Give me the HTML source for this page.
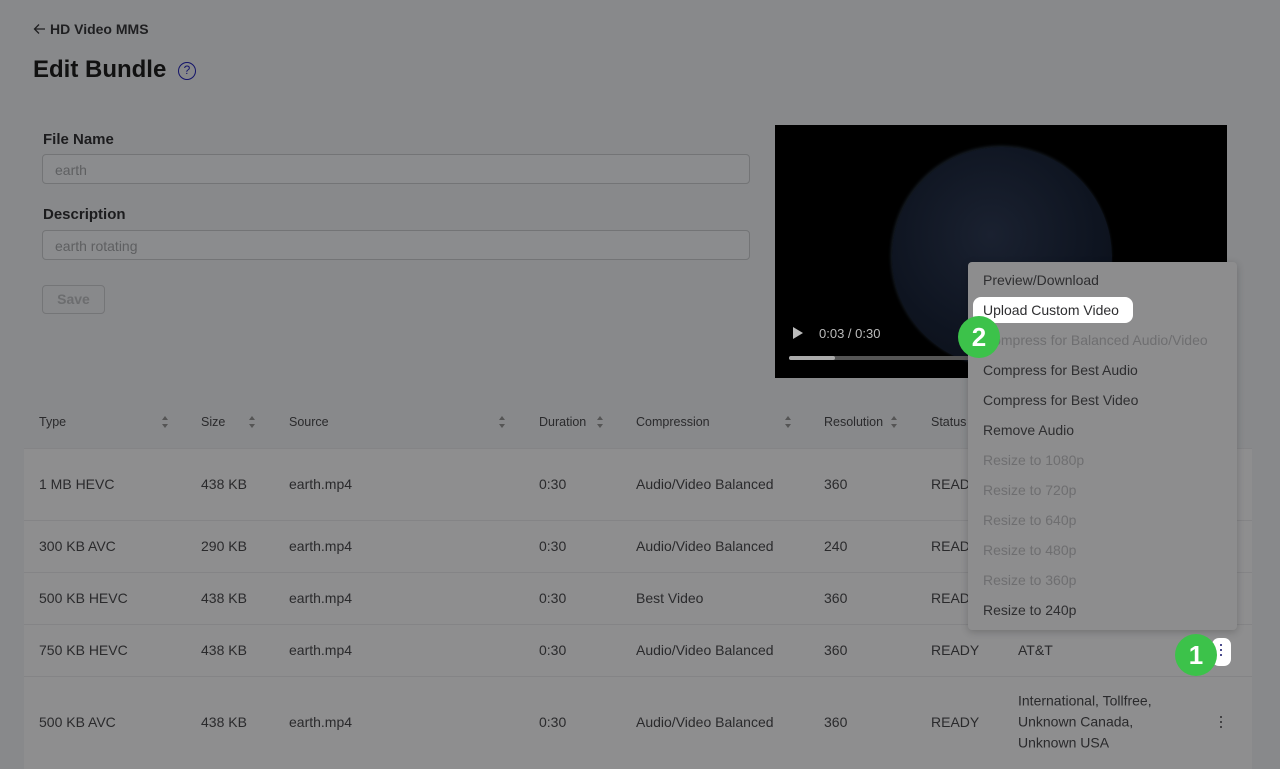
<!DOCTYPE html>
<html><head><meta charset="utf-8"><style>
*{box-sizing:border-box;margin:0;padding:0}
body{width:1280px;height:769px;overflow:hidden;background:#88898b;font-family:"Liberation Sans",sans-serif;color:#1d1d1f;position:relative}
.a{position:absolute;white-space:nowrap}
.inp{position:absolute;left:42px;width:708px;height:30px;border:1px solid #737476;border-radius:4px;background:#8b8c8e;color:#5e5f61;font-size:14px;padding:7px 12px}
.lbl{font-size:15px;font-weight:bold;color:#1c1c1e}
.th{font-size:12.5px;color:#2a2a2c;top:415px}
.sort{position:absolute;top:415px;width:8px;height:14px}
.row{position:absolute;left:24px;width:1228px;background:#8e8e8f;border-top:1px solid #848486}
.td{position:absolute;font-size:14px;color:#2a2a2c;transform:translateY(-50%)}
.menu{position:absolute;left:968px;top:262px;width:269px;height:368px;background:#8d8d8e;border-radius:4px;box-shadow:0 2px 8px rgba(0,0,0,.2)}
.mi{position:absolute;left:15px;font-size:14px;color:#2e2e30;transform:translateY(-50%)}
.dis{color:#6e6e70}
.badge{position:absolute;width:42px;height:42px;border-radius:50%;background:#3cc24a;color:#fff;font-weight:bold;font-size:26px;text-align:center;line-height:42px}
.dots{position:absolute;width:3px}
.dots i{display:block;width:2px;height:2px;border-radius:50%;margin-bottom:3px}
</style></head><body>
<svg class="a" style="left:33px;top:23px" width="13" height="12" viewBox="0 0 13 12"><path d="M12 6H2M6 1.5L1.5 6L6 10.5" fill="none" stroke="#1f1f21" stroke-width="1.3"/></svg>
<div class="a" style="left:50px;top:21px;font-size:14px;font-weight:bold;color:#1f1f21">HD Video MMS</div>
<div class="a" style="left:33px;top:56px;font-size:24px;font-weight:bold;color:#111">Edit Bundle</div>
<div class="a" style="left:178px;top:62px;width:18px;height:18px;border:1.5px solid #14146a;border-radius:50%;font-size:12px;color:#14146a;text-align:center;line-height:15px">?</div>
<div class="a lbl" style="left:43px;top:131px">File Name</div>
<div class="inp" style="top:154px">earth</div>
<div class="a lbl" style="left:43px;top:206px">Description</div>
<div class="inp" style="top:230px">earth rotating</div>
<div class="a" style="left:42px;top:285px;width:63px;height:29px;border:1px solid #747577;border-radius:4px;font-size:14px;font-weight:bold;color:#6c6d6f;text-align:center;line-height:27px">Save</div>
<div class="a" style="left:775px;top:125px;width:452px;height:253px;background:#000;overflow:hidden">
 <div style="position:absolute;left:117px;top:22px;width:220px;height:220px;border-radius:50%;background:radial-gradient(circle at 45% 40%,#1a2130,#0e1420 60%,#0a0e16);box-shadow:-1px -1px 3px rgba(100,130,170,.25)"></div>
 <div style="position:absolute;left:18px;top:202px;width:0;height:0;border-left:10px solid #bbb;border-top:6px solid transparent;border-bottom:6px solid transparent"></div>
 <div style="position:absolute;left:44px;top:201px;font-size:13px;color:#bbb">0:03 / 0:30</div>
 <div style="position:absolute;left:14px;top:231px;width:200px;height:4px;background:#555;border-radius:2px"><div style="width:46px;height:4px;background:#aaa;border-radius:2px"></div></div>
</div>
<div class="a th" style="left:39px">Type</div>
<div class="a th" style="left:201px">Size</div>
<div class="a th" style="left:289px">Source</div>
<div class="a th" style="left:539px">Duration</div>
<div class="a th" style="left:636px">Compression</div>
<div class="a th" style="left:824px">Resolution</div>
<div class="a th" style="left:931px">Status</div>
<svg class="sort" style="left:161px" viewBox="0 0 8 14"><path d="M4 1L7 5H1Z M4 13L7 9H1Z" fill="#555"/></svg>
<svg class="sort" style="left:248px" viewBox="0 0 8 14"><path d="M4 1L7 5H1Z M4 13L7 9H1Z" fill="#555"/></svg>
<svg class="sort" style="left:498px" viewBox="0 0 8 14"><path d="M4 1L7 5H1Z M4 13L7 9H1Z" fill="#555"/></svg>
<svg class="sort" style="left:596px" viewBox="0 0 8 14"><path d="M4 1L7 5H1Z M4 13L7 9H1Z" fill="#555"/></svg>
<svg class="sort" style="left:784px" viewBox="0 0 8 14"><path d="M4 1L7 5H1Z M4 13L7 9H1Z" fill="#555"/></svg>
<svg class="sort" style="left:890px" viewBox="0 0 8 14"><path d="M4 1L7 5H1Z M4 13L7 9H1Z" fill="#555"/></svg>
<div class="row" style="top:448px;height:72px"></div>
<div class="row" style="top:520px;height:52px"></div>
<div class="row" style="top:572px;height:52px"></div>
<div class="row" style="top:624px;height:52px"></div>
<div class="row" style="top:676px;height:93px"></div>
<div class="td" style="left:39px;top:484px">1 MB HEVC</div><div class="td" style="left:201px;top:484px">438 KB</div><div class="td" style="left:289px;top:484px">earth.mp4</div><div class="td" style="left:539px;top:484px">0:30</div><div class="td" style="left:636px;top:484px">Audio/Video Balanced</div><div class="td" style="left:824px;top:484px">360</div><div class="td" style="left:931px;top:484px">READY</div>
<div class="td" style="left:39px;top:546px">300 KB AVC</div><div class="td" style="left:201px;top:546px">290 KB</div><div class="td" style="left:289px;top:546px">earth.mp4</div><div class="td" style="left:539px;top:546px">0:30</div><div class="td" style="left:636px;top:546px">Audio/Video Balanced</div><div class="td" style="left:824px;top:546px">240</div><div class="td" style="left:931px;top:546px">READY</div>
<div class="td" style="left:39px;top:598px">500 KB HEVC</div><div class="td" style="left:201px;top:598px">438 KB</div><div class="td" style="left:289px;top:598px">earth.mp4</div><div class="td" style="left:539px;top:598px">0:30</div><div class="td" style="left:636px;top:598px">Best Video</div><div class="td" style="left:824px;top:598px">360</div><div class="td" style="left:931px;top:598px">READY</div>
<div class="td" style="left:39px;top:650px">750 KB HEVC</div><div class="td" style="left:201px;top:650px">438 KB</div><div class="td" style="left:289px;top:650px">earth.mp4</div><div class="td" style="left:539px;top:650px">0:30</div><div class="td" style="left:636px;top:650px">Audio/Video Balanced</div><div class="td" style="left:824px;top:650px">360</div><div class="td" style="left:931px;top:650px">READY</div><div class="td" style="left:1018px;top:650px">AT&amp;T</div>
<div class="td" style="left:39px;top:722px">500 KB AVC</div><div class="td" style="left:201px;top:722px">438 KB</div><div class="td" style="left:289px;top:722px">earth.mp4</div><div class="td" style="left:539px;top:722px">0:30</div><div class="td" style="left:636px;top:722px">Audio/Video Balanced</div><div class="td" style="left:824px;top:722px">360</div><div class="td" style="left:931px;top:722px">READY</div>
<div class="td" style="left:1018px;top:722px;line-height:21px">International, Tollfree,<br>Unknown Canada,<br>Unknown USA</div>
<div class="dots" style="left:1220px;top:716px"><i style="background:#2a2a2c"></i><i style="background:#2a2a2c"></i><i style="background:#2a2a2c"></i></div>
<div class="a" style="left:1212px;top:638px;width:19px;height:28px;background:#fff;border-radius:7px"></div>
<div class="dots" style="left:1220px;top:644px"><i style="background:#14146a"></i><i style="background:#14146a"></i><i style="background:#14146a"></i></div>
<div class="menu">
 <div class="mi" style="top:18px">Preview/Download</div>
 <div class="a" style="left:5px;top:35px;width:160px;height:26px;background:#fff;border-radius:8px"></div>
 <div class="mi" style="top:48px">Upload Custom Video</div>
 <div class="mi dis" style="top:78px">Compress for Balanced Audio/Video</div>
 <div class="mi" style="top:108px">Compress for Best Audio</div>
 <div class="mi" style="top:138px">Compress for Best Video</div>
 <div class="mi" style="top:168px">Remove Audio</div>
 <div class="mi dis" style="top:198px">Resize to 1080p</div>
 <div class="mi dis" style="top:228px">Resize to 720p</div>
 <div class="mi dis" style="top:258px">Resize to 640p</div>
 <div class="mi dis" style="top:288px">Resize to 480p</div>
 <div class="mi dis" style="top:318px">Resize to 360p</div>
 <div class="mi" style="top:348px">Resize to 240p</div>
</div>
<div class="badge" style="left:958px;top:316px">2</div>
<div class="badge" style="left:1175px;top:634px">1</div>
</body></html>
